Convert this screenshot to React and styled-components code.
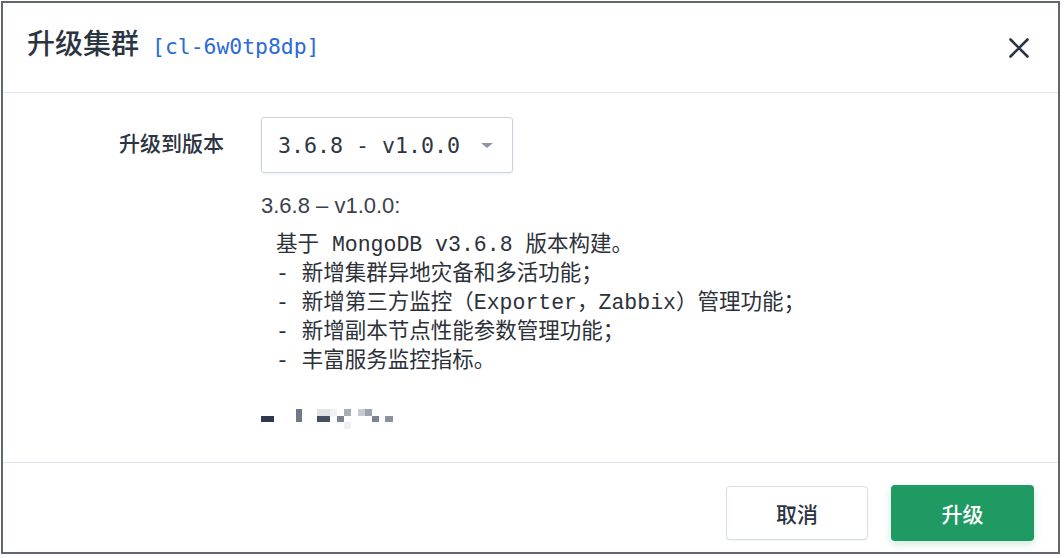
import React from "react";
import styled, { createGlobalStyle } from "styled-components";

const Global = createGlobalStyle`
  html, body { margin: 0; padding: 0; background: #ffffff; }
  body { font-family: "Liberation Sans", "Noto Sans CJK SC", sans-serif; }
  * { box-sizing: border-box; }
`;

const Page = styled.div`
  padding: 1px;
  width: 1064px;
  height: 558px;
`;

const Frame = styled.div`
  width: 1059px;
  height: 553px;
  border: 2px solid #62666e;
  background: #ffffff;
  display: flex;
  flex-direction: column;
`;

const Header = styled.header`
  height: 90px;
  flex: none;
  border-bottom: 1px solid #dfe5ec;
  display: flex;
  align-items: center;
  justify-content: space-between;
  padding: 0 29px 0 24px;
`;

const Title = styled.h1`
  margin: 0;
  padding-bottom: 10px;
  display: flex;
  align-items: baseline;
  gap: 13px;
  font-family: "Noto Sans CJK SC", sans-serif;
  font-size: 28px;
  font-weight: 500;
  color: #2b3441;
  line-height: 1;
`;

const ClusterId = styled.span`
  font-family: "DejaVu Sans Mono", monospace;
  font-size: 21.4px;
  font-weight: 400;
  color: #2b6ad8;
`;

const CloseButton = styled.button`
  border: 0;
  background: none;
  padding: 0;
  width: 20px;
  height: 20px;
  display: flex;
  align-items: center;
  justify-content: center;
  cursor: pointer;
  color: #2b3441;
`;

const Body = styled.main`
  flex: 1;
  padding-top: 24px;
`;

const FieldRow = styled.div`
  display: grid;
  grid-template-columns: 221px 1fr;
  column-gap: 37px;
  align-items: start;
`;

const Label = styled.label`
  text-align: right;
  font-family: "Noto Sans CJK SC", sans-serif;
  font-size: 21px;
  font-weight: 500;
  color: #2b3441;
  line-height: 50px;
`;

const Field = styled.div`
  display: flex;
  flex-direction: column;
  align-items: flex-start;
`;

const Select = styled.div`
  width: 252px;
  height: 56px;
  border: 1px solid #cbd4df;
  border-radius: 3px;
  box-shadow: 0 1px 3px rgba(40, 60, 90, 0.08);
  display: flex;
  align-items: center;
  justify-content: space-between;
  padding: 0 19px 0 16px;
  font-family: "DejaVu Sans Mono", monospace;
  font-size: 21.6px;
  color: #2d3542;
`;

const Caret = styled.span`
  width: 0;
  height: 0;
  border-left: 6.5px solid transparent;
  border-right: 6.5px solid transparent;
  border-top: 5px solid #8b95a3;
`;

const VersionTitle = styled.div`
  margin-top: 18px;
  font-family: "Liberation Sans", sans-serif;
  font-size: 22px;
  line-height: 30px;
  color: #3b414c;
`;

const Notes = styled.pre`
  margin: 10px 0 0;
  padding-left: 15px;
  font-family: "Liberation Mono", "Noto Sans CJK SC", monospace;
  font-size: 21.5px;
  line-height: 29px;
  color: #2c3139;
  white-space: pre;
`;

const Mosaic = styled.svg`
  display: block;
  margin-top: 33px;
`;

const Footer = styled.footer`
  flex: none;
  height: 90px;
  border-top: 1px solid #dfe5ec;
  display: flex;
  justify-content: flex-end;
  align-items: flex-start;
  gap: 23px;
  padding: 22px 24px 0 0;
`;

const Button = styled.button`
  width: ${(p) => (p.$primary ? "143px" : "142px")};
  height: ${(p) => (p.$primary ? "56px" : "54px")};
  margin-top: ${(p) => (p.$primary ? "0" : "1px")};
  border-radius: 4px;
  border: ${(p) => (p.$primary ? "none" : "1px solid #d6dee9")};
  background: ${(p) => (p.$primary ? "#1f9a62" : "#ffffff")};
  color: ${(p) => (p.$primary ? "#ffffff" : "#2b3441")};
  box-shadow: ${(p) =>
    p.$primary ? "0 3px 8px rgba(31, 154, 98, 0.22)" : "0 1px 2px rgba(40,60,90,0.06)"};
  font-family: "Noto Sans CJK SC", sans-serif;
  font-size: 21px;
  font-weight: 500;
  cursor: pointer;
`;

const cells = [
  [0, 7, 13, 6, "#2f3a4d"],
  [35, 0, 6, 13, "#707989"],
  [56, 0, 13, 7, "#dfe2e6"],
  [56, 7, 13, 6, "#465061"],
  [69, 0, 7, 7, "#eff1f3"],
  [76, 7, 7, 6, "#7a8391"],
  [83, 0, 7, 7, "#a7aeb8"],
  [83, 13, 7, 7, "#eef0f4"],
  [97, 0, 7, 7, "#c6cad1"],
  [104, 0, 7, 7, "#9ca3ae"],
  [111, 7, 7, 6, "#7a8391"],
  [124, 7, 8, 6, "#8a92a0"],
];

export default function App() {
  return (
    <>
      <Global />
      <Page>
        <Frame>
          <Header>
            <Title>
              升级集群<ClusterId>[cl-6w0tp8dp]</ClusterId>
            </Title>
            <CloseButton aria-label="关闭">
              <svg width="20" height="20" viewBox="0 0 20 20">
                <path
                  d="M1.5 1.5 L18.5 18.5 M18.5 1.5 L1.5 18.5"
                  stroke="currentColor"
                  strokeWidth="2.6"
                  strokeLinecap="round"
                  fill="none"
                />
              </svg>
            </CloseButton>
          </Header>
          <Body>
            <FieldRow>
              <Label>升级到版本</Label>
              <Field>
                <Select>
                  <span>3.6.8 - v1.0.0</span>
                  <Caret />
                </Select>
                <VersionTitle>3.6.8 – v1.0.0:</VersionTitle>
                <Notes>{`基于 MongoDB v3.6.8 版本构建。
- 新增集群异地灾备和多活功能；
- 新增第三方监控（Exporter，Zabbix）管理功能；
- 新增副本节点性能参数管理功能；
- 丰富服务监控指标。`}</Notes>
                <Mosaic width="134" height="20" viewBox="0 0 134 20">
                  {cells.map(([x, y, w, h, c], i) => (
                    <rect key={i} x={x} y={y} width={w} height={h} fill={c} />
                  ))}
                </Mosaic>
              </Field>
            </FieldRow>
          </Body>
          <Footer>
            <Button>取消</Button>
            <Button $primary>升级</Button>
          </Footer>
        </Frame>
      </Page>
    </>
  );
}
